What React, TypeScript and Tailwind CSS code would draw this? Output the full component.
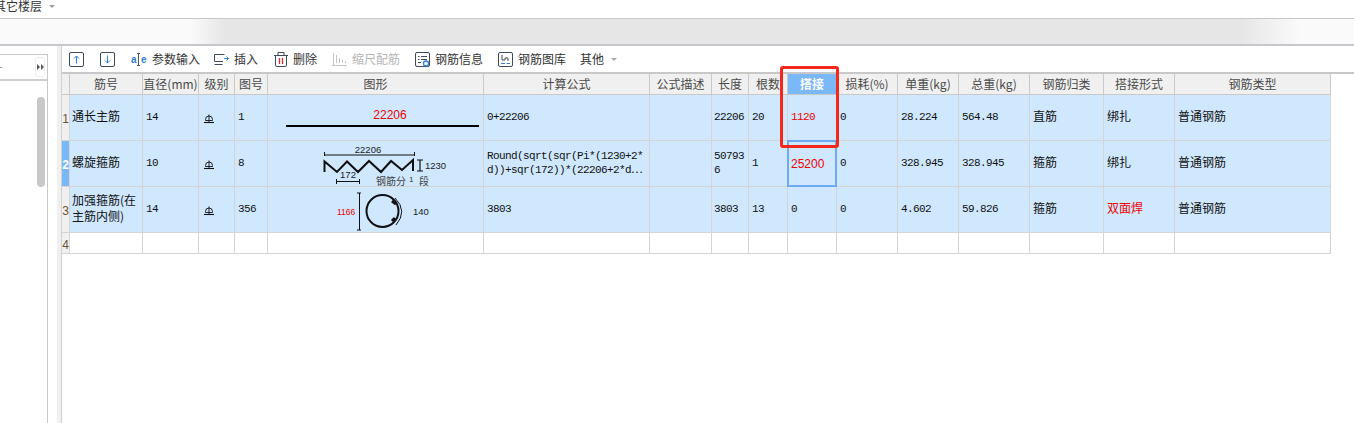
import React from "react";

const CN = "[font-family:'Noto_Sans_CJK_SC','Liberation_Sans',sans-serif]";
const MONO = "[font-family:'Liberation_Mono','Noto_Sans_CJK_SC',monospace]";
const COLS = "grid grid-cols-[8px_73px_56px_36px_33px_216px_166px_62px_37px_39px_49px_61px_61px_71px_74px_71px_156px]";

const Grade = () => (
  <svg width="10" height="10" viewBox="0 0 10 10" fill="none" stroke="#111" strokeWidth="0.9" className="ml-[2px] mt-[2px]">
    <path d="M1.500 5.500Q1.500 2 5 2T8.500 5.500V6.500H1.500Z" />
    <path d="M5 0.500V8.500" />
    <path d="M0 8.500h10" strokeWidth="1.100" />
  </svg>
);

const Frame = ({ children }: { children: React.ReactNode }) => (
  <svg width="15" height="15" viewBox="0 0 15 15" fill="none" className="shrink-0">
    <rect x="0.5" y="0.5" width="14" height="14" rx="1.5" stroke="#3f4a5f" />
    {children}
  </svg>
);

const ToolItem = ({ icon, label, muted, cls }: { icon: React.ReactNode; label: string; muted?: boolean; cls: string }) => (
  <div className={`flex items-center gap-[5px] ${cls}`}>
    {icon}
    <span className={`text-[12px] leading-none whitespace-nowrap ${muted ? "text-[#b5b5b5]" : "text-[#333]"}`}>{label}</span>
  </div>
);

const Toolbar = () => (
  <div className={`flex h-[26px] items-center pl-[7px] bg-white ${CN}`}>
    <Frame><path d="M7.5 11.5V4M5 6.5l2.5-2.5L10 6.5" stroke="#2f7fe0" /></Frame>
    <div className="ml-[16px]"><Frame><path d="M7.5 3.5V11M5 8.5l2.5 2.5L10 8.5" stroke="#2f7fe0" /></Frame></div>
    <ToolItem
      cls="ml-[16px]"
      label="参数输入"
      icon={
        <svg width="16" height="15" viewBox="0 0 16 15" fill="none">
          <text x="0" y="11" fontSize="10" fontWeight="700" fill="#2f7fe0" fontFamily="'Liberation Sans',sans-serif">a</text>
          <text x="10" y="11" fontSize="10" fontWeight="700" fill="#2f7fe0" fontFamily="'Liberation Sans',sans-serif">e</text>
          <path d="M6 1.5h3M6 13.5h3M7.5 1.5v12" stroke="#555" />
        </svg>
      }
    />
    <ToolItem
      cls="ml-[14px]"
      label="插入"
      icon={
        <svg width="15" height="15" viewBox="0 0 15 15" fill="none" stroke="#3f4a5f">
          <path d="M10.500 2.500H.5V9.500H9" />
          <path d="M.5 12.500h8" />
          <path d="M10 6.500h4.500M12.500 4.500l2 2-2 2" stroke="#2f7fe0" />
        </svg>
      }
    />
    <ToolItem
      cls="ml-[16px]"
      label="删除"
      icon={
        <svg width="14" height="15" viewBox="0 0 14 15" fill="none" stroke="#3f4a5f">
          <path d="M0 3.500h14M4 3.500V.5h6v3" />
          <path d="M1.500 3.500v9.500a1.500 1.500 0 0 0 1.500 1.500h8a1.500 1.500 0 0 0 1.500-1.500V3.500" />
          <path d="M5.500 6v6M8.500 6v6" stroke="#e02b2b" strokeWidth="1.300" />
        </svg>
      }
    />
    <ToolItem
      cls="ml-[15px]"
      label="缩尺配筋"
      muted
      icon={
        <svg width="15" height="15" viewBox="0 0 15 15" fill="none" stroke="#c4c4c4">
          <path d="M1.500 1v13M4.500 3v8M7.500 6v5M10.500 8v3M13.500 9v2M0 13.500h15" />
        </svg>
      }
    />
    <ToolItem
      cls="ml-[15px]"
      label="钢筋信息"
      icon={
        <Frame>
          <path d="M3 4.500h1.500M6 4.500h6M3 7.500h1.500M6 7.500h6M3 10.500h3" stroke="#3f4a5f" />
          <circle cx="11" cy="11.500" r="2.500" stroke="#2f7fe0" fill="#fff" strokeWidth="1.300" />
        </Frame>
      }
    />
    <ToolItem
      cls="ml-[15px]"
      label="钢筋图库"
      icon={
        <Frame>
          <path d="M4 3v5h3V6h3v3" stroke="#3f4a5f" />
          <path d="M3 11.500h4M8.500 11.500h3.500" stroke="#2f7fe0" />
        </Frame>
      }
    />
    <span className="ml-[14px] text-[12px] leading-none text-[#333] whitespace-nowrap">其他</span>
    <span className="ml-[7px] w-0 h-0 border-x-[3px] border-x-transparent border-t-[3px] border-t-[#a8a8a8]" />
  </div>
);

const Head = ({ children, active }: { children?: React.ReactNode; active?: boolean }) => (
  <div
    className={`flex items-center justify-center h-[21px] border-r border-b border-[#c9c9c9] text-[12px] leading-none whitespace-nowrap overflow-hidden ${
      active ? "bg-[#7ab8f8] text-white font-bold" : "bg-[#f0f0f0] text-[#4a4a4a]"
    } ${CN}`}
  >
    {children}
  </div>
);

const Cell = ({ children, cls = "", blank }: { children?: React.ReactNode; cls?: string; blank?: boolean }) => (
  <div
    className={`flex items-center pl-[3px] border-r border-b border-[#d4d4d4] text-[#111] overflow-hidden ${blank ? "bg-white" : "bg-[#cfe8fe]"} ${cls}`}
  >
    {children}
  </div>
);

const Mono = ({ children, red }: { children: React.ReactNode; red?: boolean }) => (
  <span className={`text-[11px] tracking-[-0.6px] leading-[14px] whitespace-nowrap mb-[1px] ${MONO} ${red ? "text-[#f00000]" : "text-[#111]"}`}>{children}</span>
);

const Zh = ({ children, red }: { children: React.ReactNode; red?: boolean }) => (
  <span className={`text-[12px] leading-[16px] mb-[3px] ${CN} ${red ? "text-[#f00000]" : "text-[#111]"}`}>{children}</span>
);

const RowNo = ({ n, active }: { n: number; active?: boolean }) => (
  <div
    className={`flex items-center justify-center pt-[3px] border-r border-b border-[#d4d4d4] overflow-hidden text-[12px] leading-none [font-family:'Liberation_Sans',sans-serif] ${
      active ? "bg-[#7ab8f8] text-white font-bold" : "bg-[#f0f0f0] text-[#6b5434]"
    }`}
  >
    {n}
  </div>
);

const svgText = { fontFamily: "'Liberation Sans','Noto Sans CJK SC',sans-serif" };

const Shape1 = () => (
  <svg width="215" height="45" viewBox="0 0 215 45" fill="none">
    <text x="122" y="24" textAnchor="middle" fontSize="12" fill="#f00000" style={svgText}>22206</text>
    <path d="M18 31H211" stroke="#000" strokeWidth="2" />
  </svg>
);

const Shape2 = () => (
  <svg width="215" height="45" viewBox="0 0 215 45" fill="none">
    <path d="M56.500 11v4M146.500 11v4M56 14h91" stroke="#111" />
    <text x="100" y="12" textAnchor="middle" fontSize="9.500" fill="#222" style={svgText}>22206</text>
    <path d="M56.500 31V20.500L69 31L79 20.500L90 31L101 20L113 31L123 20L134 29L145 19V30" stroke="#111" strokeWidth="2" />
    <path d="M149 19h6M152 19v11M149 30h6" stroke="#111" strokeWidth="1.200" />
    <text x="157" y="28" fontSize="9.500" fill="#222" style={svgText}>1230</text>
    <text x="80" y="37" textAnchor="middle" fontSize="9.500" fill="#222" style={svgText}>172</text>
    <path d="M68.500 38v5M91.500 38v5M68 40.500h24" stroke="#111" />
    <text x="108" y="44" fontSize="10" fill="#444" style={svgText}>钢筋分</text>
    <text x="141" y="41" fontSize="8" fill="#333" style={svgText}>1</text>
    <text x="151" y="44" fontSize="10" fill="#444" style={svgText}>段</text>
  </svg>
);

const Shape3 = () => (
  <svg width="215" height="45" viewBox="0 0 215 45" fill="none">
    <text x="69" y="28" fontSize="8.500" fill="#f00000" style={svgText}>1166</text>
    <path d="M91.500 6V43M89 6h4M89 43h4" stroke="#111" />
    <circle cx="114.500" cy="24" r="16" stroke="#111" strokeWidth="2" />
    <path d="M127 11Q140 24 128 38" stroke="#111" />
    <path d="M124 14l4 3M124 34l3-3" stroke="#111" strokeWidth="3" />
    <text x="145" y="28" fontSize="9.500" fill="#222" style={svgText}>140</text>
  </svg>
);

const Table = () => (
  <div className="relative w-[1269px]">
    <div className={COLS}>
      <Head />
      <Head>筋号</Head>
      <Head>直径(mm)</Head>
      <Head>级别</Head>
      <Head>图号</Head>
      <Head>图形</Head>
      <Head>计算公式</Head>
      <Head>公式描述</Head>
      <Head>长度</Head>
      <Head>根数</Head>
      <Head active>搭接</Head>
      <Head>损耗(%)</Head>
      <Head>单重(kg)</Head>
      <Head>总重(kg)</Head>
      <Head>钢筋归类</Head>
      <Head>搭接形式</Head>
      <Head>钢筋类型</Head>
    </div>
    <div className={`${COLS} h-[46px]`}>
      <RowNo n={1} />
      <Cell cls="!pl-[2px]"><Zh>通长主筋</Zh></Cell>
      <Cell><Mono>14</Mono></Cell>
      <Cell><Grade /></Cell>
      <Cell><Mono>1</Mono></Cell>
      <Cell cls="!pl-0"><Shape1 /></Cell>
      <Cell><Mono>0+22206</Mono></Cell>
      <Cell />
      <Cell cls="!pl-[2px]"><Mono>22206</Mono></Cell>
      <Cell><Mono>20</Mono></Cell>
      <Cell><Mono red>1120</Mono></Cell>
      <Cell><Mono>0</Mono></Cell>
      <Cell><Mono>28.224</Mono></Cell>
      <Cell><Mono>564.48</Mono></Cell>
      <Cell><Zh>直筋</Zh></Cell>
      <Cell><Zh>绑扎</Zh></Cell>
      <Cell><Zh>普通钢筋</Zh></Cell>
    </div>
    <div className={`${COLS} h-[46px]`}>
      <RowNo n={2} active />
      <Cell cls="!pl-[2px]"><Zh>螺旋箍筋</Zh></Cell>
      <Cell><Mono>10</Mono></Cell>
      <Cell><Grade /></Cell>
      <Cell><Mono>8</Mono></Cell>
      <Cell cls="!pl-0"><Shape2 /></Cell>
      <Cell><Mono>Round(sqrt(sqr(Pi*(1230+2*<br />d))+sqr(172))*(22206+2*d⋯</Mono></Cell>
      <Cell />
      <Cell cls="!pl-[2px]"><Mono>50793<br />6</Mono></Cell>
      <Cell><Mono>1</Mono></Cell>
      <Cell cls="!border-2 !border-[#6eaaef] !pl-[2px] -mt-px -ml-px">
        <span className="text-[12px] leading-none text-[#f00000] [font-family:'Liberation_Sans',sans-serif]">25200</span>
      </Cell>
      <Cell><Mono>0</Mono></Cell>
      <Cell><Mono>328.945</Mono></Cell>
      <Cell><Mono>328.945</Mono></Cell>
      <Cell><Zh>箍筋</Zh></Cell>
      <Cell><Zh>绑扎</Zh></Cell>
      <Cell><Zh>普通钢筋</Zh></Cell>
    </div>
    <div className={`${COLS} h-[46px]`}>
      <RowNo n={3} />
      <Cell cls="!pl-[2px]"><Zh>加强箍筋(在<br />主筋内侧)</Zh></Cell>
      <Cell><Mono>14</Mono></Cell>
      <Cell><Grade /></Cell>
      <Cell><Mono>356</Mono></Cell>
      <Cell cls="!pl-0"><Shape3 /></Cell>
      <Cell><Mono>3803</Mono></Cell>
      <Cell />
      <Cell cls="!pl-[2px]"><Mono>3803</Mono></Cell>
      <Cell><Mono>13</Mono></Cell>
      <Cell><Mono>0</Mono></Cell>
      <Cell><Mono>0</Mono></Cell>
      <Cell><Mono>4.602</Mono></Cell>
      <Cell><Mono>59.826</Mono></Cell>
      <Cell><Zh>箍筋</Zh></Cell>
      <Cell><Zh red>双面焊</Zh></Cell>
      <Cell><Zh>普通钢筋</Zh></Cell>
    </div>
    <div className={`${COLS} h-[21px]`}>
      <RowNo n={4} />
      {Array.from({ length: 16 }).map((_, i) => (
        <Cell key={i} blank />
      ))}
    </div>
    <div className="absolute left-[718px] top-[-8px] w-[59px] h-[82px] border-[3px] border-[#f5261a] rounded-[3px]" />
  </div>
);

const LeftPanel = () => (
  <div className="w-[48px] mt-[8px] border-t border-r border-[#c8c8c8] flex flex-col shrink-0">
    <div className="h-[26px] border-b-2 border-[#cfcfcf] flex items-center justify-between">
      <span className="w-[2px] h-px bg-[#999]" />
      <div className="w-[10px] h-[20px] mr-[2px] border border-[#eeeeee] rounded-[3px] flex items-center justify-center gap-px">
        <span className="w-0 h-0 border-y-[3px] border-y-transparent border-l-[3px] border-l-[#555]" />
        <span className="w-0 h-0 border-y-[3px] border-y-transparent border-l-[3px] border-l-[#555]" />
      </div>
    </div>
    <div className="flex justify-end pt-[16px] pr-[2px]">
      <div className="w-[8px] h-[90px] rounded-full bg-[#c8c8c8]" />
    </div>
  </div>
);

export default function App() {
  return (
    <div className={`w-[1354px] h-[423px] overflow-hidden bg-white ${CN}`}>
      <div className="h-[19px] border-b border-[#c8c8cc] flex items-center pb-[6px] bg-white">
        <span className="ml-[-6px] text-[12px] leading-none text-[#333]">其它楼层</span>
        <span className="ml-[7px] w-0 h-0 border-x-[3px] border-x-transparent border-t-[3px] border-t-[#9a9a9a]" />
      </div>
      <div className="h-[25px] bg-[linear-gradient(90deg,#fafafa_0,#fafafa_190px,#e6e6e6_225px,#e6e6e6_1240px,#fafafa_1300px)]" />
      <div className="h-[2px] bg-[#c8c8cc]" />
      <div className="flex h-[377px]">
        <LeftPanel />
        <div className="w-[9px] shrink-0 bg-white" />
        <div className="w-[5px] shrink-0 bg-[#f0f0f0]" />
        <div className="flex-1 min-w-0 border-l border-[#d0d0d0] -ml-px">
          <Toolbar />
          <div className="h-[2px] bg-[#c8c8c8]" />
          <Table />
        </div>
      </div>
    </div>
  );
}
